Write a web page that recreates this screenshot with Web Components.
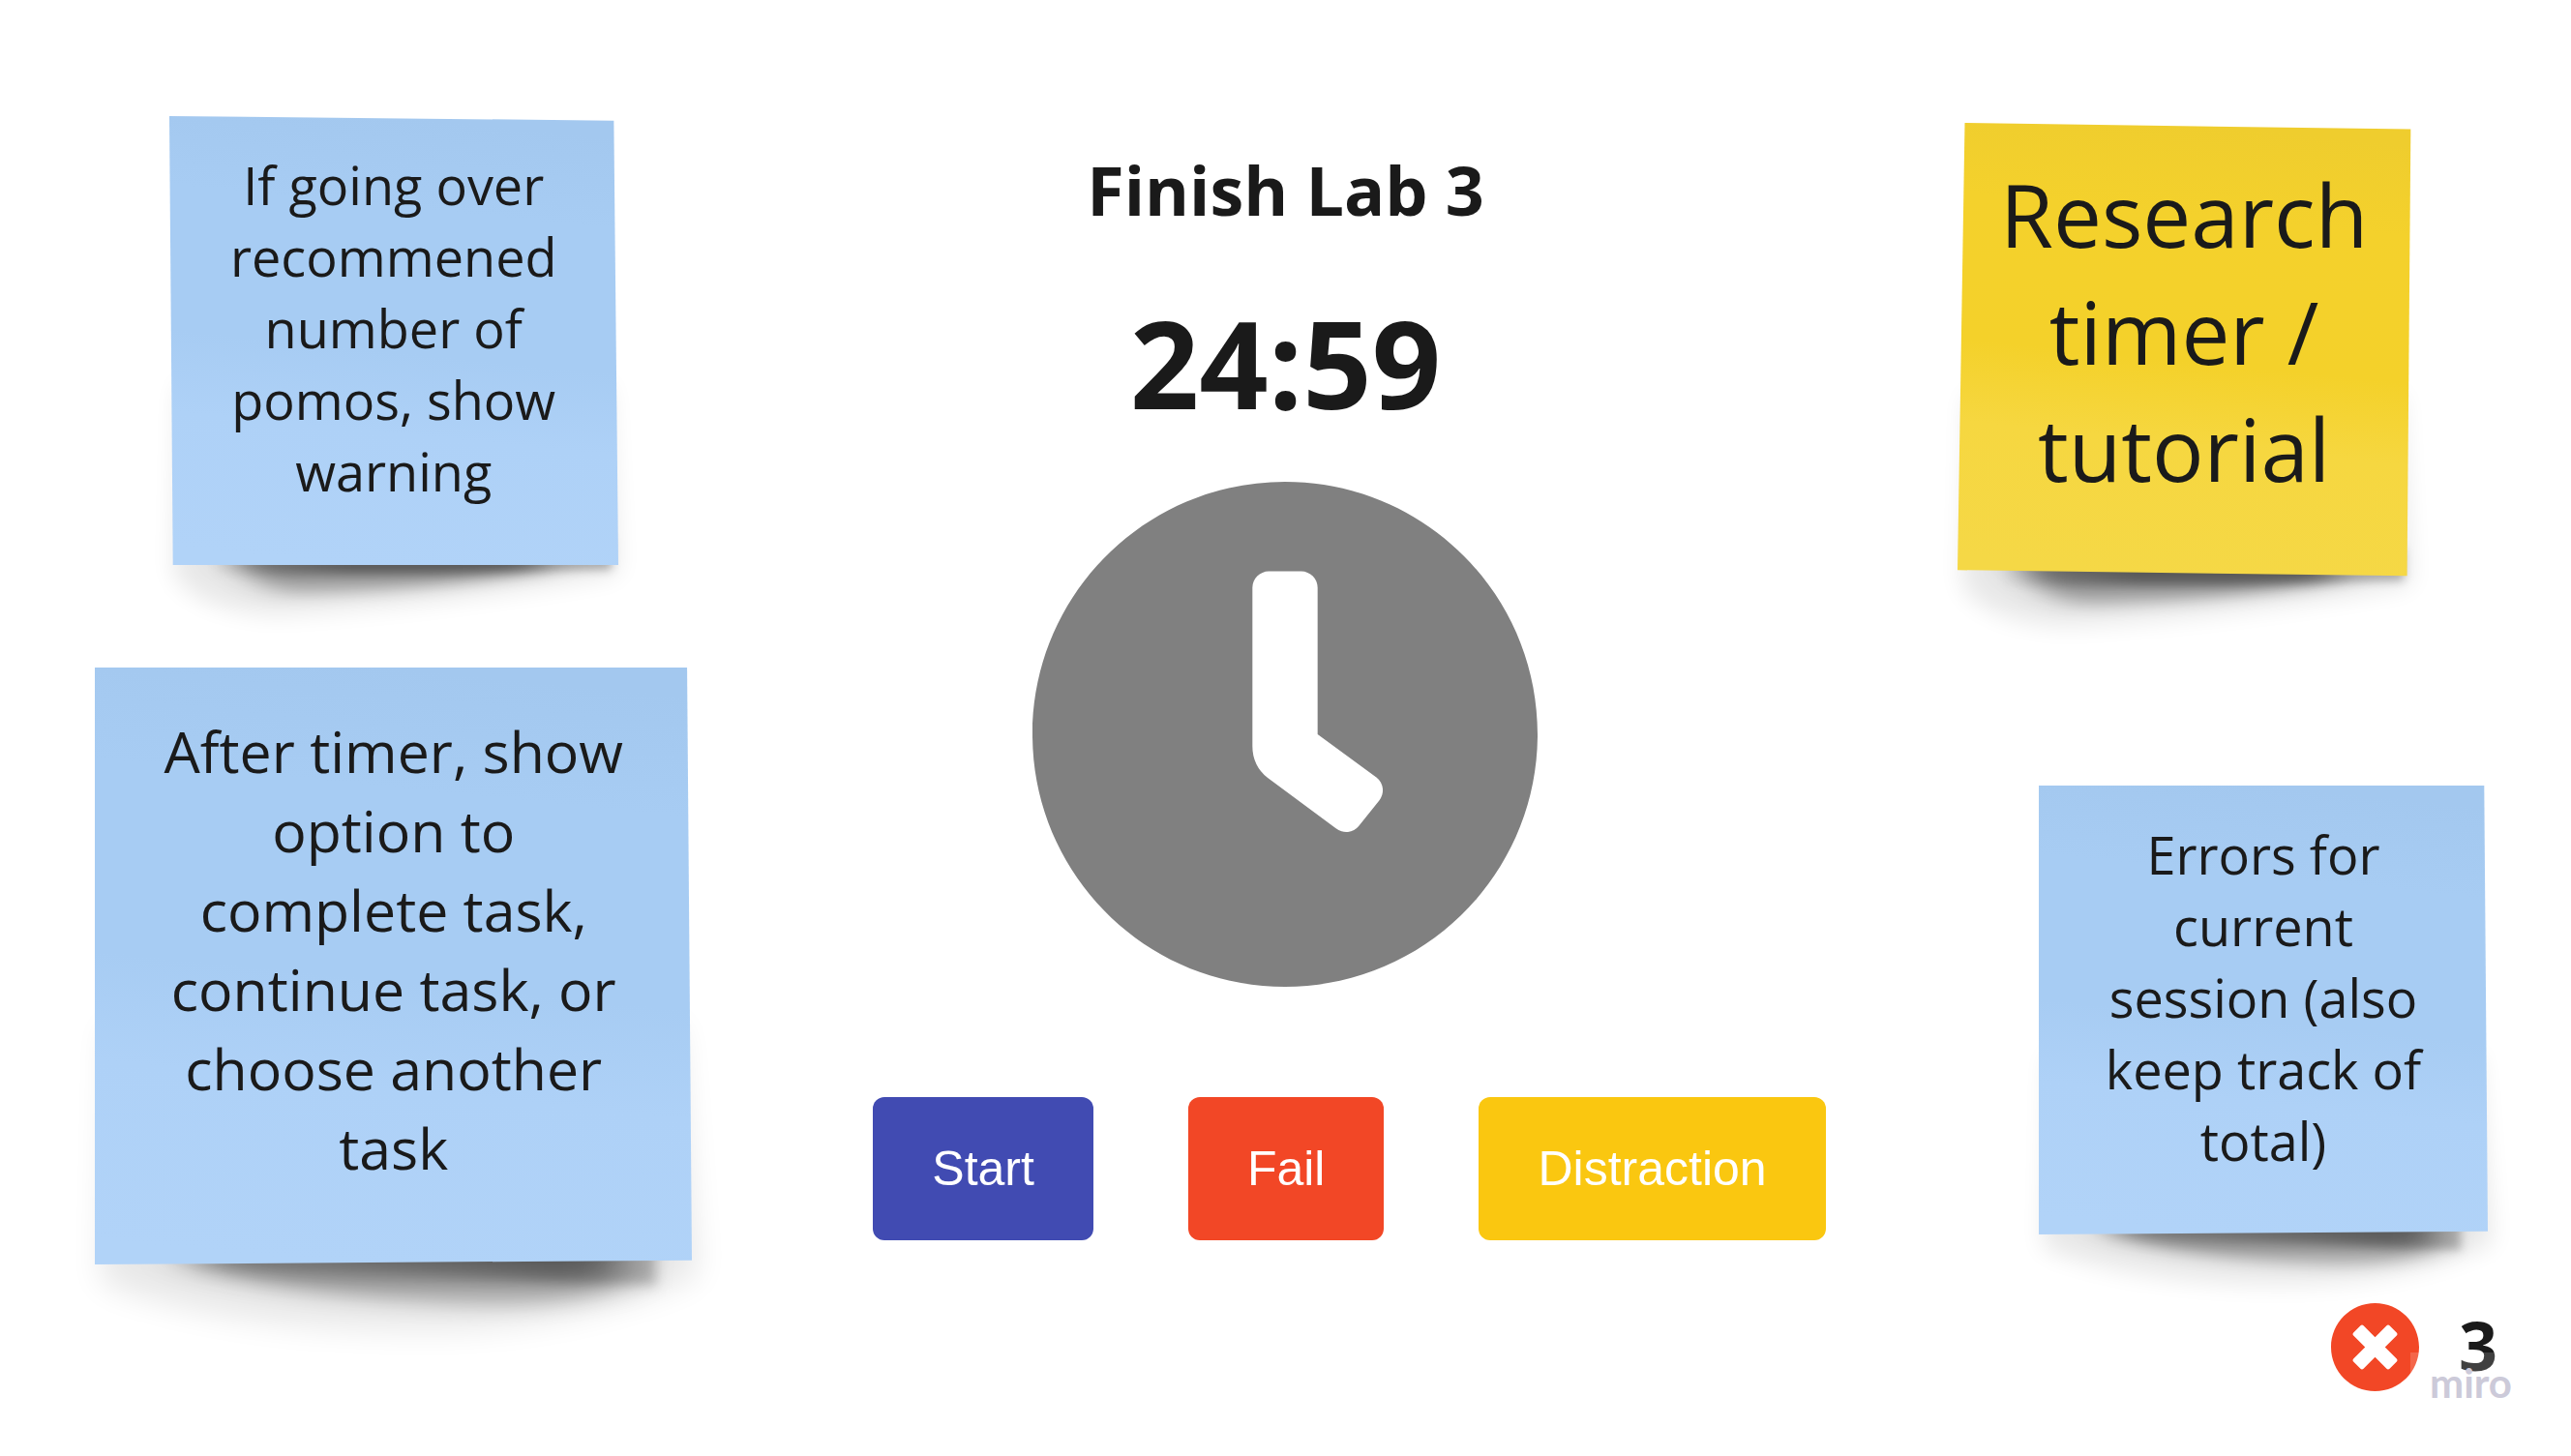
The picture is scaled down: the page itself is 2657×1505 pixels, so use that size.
<!DOCTYPE html>
<html lang="en">
<head>
<meta charset="utf-8">
<title>Finish Lab 3</title>
<style>
  body { margin: 0; background: #fff; color: #1a1a1a; font-family: "Open Sans", "Noto Sans", sans-serif; }
</style>
</head>
<body>
<pomo-board>
  <sticky-note slot="left" tone="blue" cut="a">If going over recommened number of pomos, show warning</sticky-note>
  <sticky-note slot="left" tone="blue" cut="b" size="large">After timer, show option to complete task, continue task, or choose another task</sticky-note>
  <pomo-session heading="Finish Lab 3" time="24:59"></pomo-session>
  <sticky-note slot="right" tone="yellow" cut="c" size="headline">Research timer / tutorial</sticky-note>
  <sticky-note slot="right" tone="blue" cut="b">Errors for current session (also keep track of total)</sticky-note>
  <error-count slot="right">3</error-count>
  <board-mark slot="mark">miro</board-mark>
</pomo-board>

<script>
const attach = (el, html) => { el.attachShadow({ mode: "open" }).innerHTML = html; };

customElements.define("pomo-board", class extends HTMLElement {
  constructor() {
    super();
    attach(this, `
      <style>
        :host { display: block; position: relative; min-height: 100vh; overflow: hidden; }
        main { display: grid; grid-template-columns: 28fr 43fr 28fr; align-items: start; }
        .side { display: flex; flex-direction: column; }
        .left { align-items: center; gap: 106px; padding: 120px 0 0 62px; }
        .right { align-items: flex-end; padding: 127px 76px 0 0; }
        .right ::slotted(sticky-note) { margin: 0 10px 71px 0; }
        .right ::slotted(sticky-note[size="headline"]) { margin: 0 90px 217px 0; }
      </style>
      <main>
        <div class="side left"><slot name="left"></slot></div>
        <slot></slot>
        <div class="side right"><slot name="right"></slot></div>
      </main>
      <slot name="mark"></slot>`);
  }
});

const CUTS = {
  a: { paper: "0,0 99,1 100,100 0.8,100", curl: "left" },
  b: { paper: "0,0 99.2,0 100,99.3 0,100", curl: "right" },
  c: { paper: "1.6,0 100,1.4 99.2,100 0,98.7", curl: "left" }
};
const CURLS = {
  left: `<path class="halo" d="M2 60L98 60L100 102Q60 109 24 111Q6 110 1 102Z"/>
         <path class="fall" d="M14 94L80 94L84 101Q55 106 26 107Q19 105 14 98Z"/>
         <path class="edge" fill="url(#fromleft)" d="M10 94L98.5 94L98.5 101L60 102L10 102Z"/>`,
  right: `<path class="halo" d="M2 60L98 60L101 102Q80 111 55 111Q22 111 1 103Z"/>
          <path class="fall" d="M16 94L88 94L88 104Q76 108 62 107Q30 105 16 100Z"/>
          <path class="edge" fill="url(#fromright)" d="M20 94L94 94L94 103.5L80 103L20 100.5Z"/>`
};
const TONES = {
  blue: ["#a3c8ef", "#a7ccf3", "#a7ccf3", "#aed1f7", "#b1d3f8"],
  yellow: ["#efcd2e", "#f4d12c", "#f4d12a", "#f6d740", "#f5d846"]
};

customElements.define("sticky-note", class extends HTMLElement {
  constructor() {
    super();
    const cut = CUTS[this.getAttribute("cut")];
    const tone = TONES[this.getAttribute("tone")];
    attach(this, `
      <style>
        :host { display: grid; width: 464px; max-width: 100%; aspect-ratio: 1; font-size: 54px; line-height: 74px; --pad: 34px 57px 0; }
        :host([size="large"]) { width: 617px; font-size: 59px; line-height: 82px; --pad: 45px 66px 0; }
        :host([size="headline"]) { width: 468px; font-size: 89px; line-height: 121px; --pad: 34px 44px 0; }
        svg, p { grid-area: 1 / 1; }
        svg { width: 100%; height: 100%; overflow: visible; }
        p { margin: 0; padding: var(--pad); text-align: center; position: relative; }
        .halo { fill: #000; opacity: .09; filter: url(#wide); }
        .fall { fill: url(#fade); filter: url(#soft); }
        .edge { filter: url(#near); }
      </style>
      <svg viewBox="0 0 100 100" preserveAspectRatio="none" aria-hidden="true">
        <defs>
          <filter id="wide" x="-20%" y="-20%" width="140%" height="150%"><feGaussianBlur stdDeviation="2.6"/></filter>
          <filter id="soft" x="-30%" y="-100%" width="160%" height="300%"><feGaussianBlur stdDeviation="4 1.6"/></filter>
          <filter id="near" x="-20%" y="-100%" width="140%" height="300%"><feGaussianBlur stdDeviation="1"/></filter>
          <linearGradient id="fade" gradientUnits="userSpaceOnUse" x1="0" y1="99" x2="0" y2="109">
            <stop offset="0" stop-color="#000" stop-opacity=".5"/>
            <stop offset=".5" stop-color="#000" stop-opacity=".3"/>
            <stop offset="1" stop-color="#000" stop-opacity=".05"/>
          </linearGradient>
          <linearGradient id="fromleft" gradientUnits="userSpaceOnUse" x1="8" y1="0" x2="100" y2="0">
            <stop offset="0" stop-color="#000" stop-opacity="0"/>
            <stop offset=".35" stop-color="#000" stop-opacity=".28"/>
            <stop offset="1" stop-color="#000" stop-opacity=".28"/>
          </linearGradient>
          <linearGradient id="fromright" gradientUnits="userSpaceOnUse" x1="20" y1="0" x2="94" y2="0">
            <stop offset="0" stop-color="#000" stop-opacity="0"/>
            <stop offset=".75" stop-color="#000" stop-opacity=".26"/>
            <stop offset="1" stop-color="#000" stop-opacity=".24"/>
          </linearGradient>
          <linearGradient id="paper" gradientUnits="userSpaceOnUse" x1="50" y1="0" x2="40" y2="100">
            <stop offset="0" stop-color="${tone[0]}"/>
            <stop offset=".2" stop-color="${tone[1]}"/>
            <stop offset=".52" stop-color="${tone[2]}"/>
            <stop offset=".7" stop-color="${tone[3]}"/>
            <stop offset="1" stop-color="${tone[4]}"/>
          </linearGradient>
        </defs>
        ${CURLS[cut.curl]}
        <polygon points="${cut.paper}" fill="url(#paper)"/>
      </svg>
      <p><slot></slot></p>`);
  }
});

customElements.define("pomo-session", class extends HTMLElement {
  constructor() {
    super();
    attach(this, `
      <style>
        :host { display: flex; flex-direction: column; align-items: center; padding-top: 148px; }
        h1 { margin: 0; font-size: 70px; line-height: 96px; font-weight: 700; }
        time { margin-top: 45px; font-size: 125px; line-height: 172px; font-weight: 700; }
        svg { width: 522px; height: 522px; margin-top: 37px; }
        .actions { display: flex; gap: 98px; margin-top: 114px; padding-left: 132px; }
      </style>
      <h1>${this.getAttribute("heading")}</h1>
      <time role="timer">${this.getAttribute("time")}</time>
      <svg viewBox="8 8 496 496" fill="#808080" aria-hidden="true"><path d="M256,8C119,8,8,119,8,256S119,504,256,504,504,393,504,256,393,8,256,8Zm92.49,313h0l-20,25a16,16,0,0,1-22.49,2.5h0l-67-49.72a40,40,0,0,1-15-31.23V112a16,16,0,0,1,16-16h32a16,16,0,0,1,16,16V256l58,42.5A16,16,0,0,1,348.49,321Z"/></svg>
      <div class="actions">
        <pomo-button style="--fill:#414bb2">Start</pomo-button>
        <pomo-button style="--fill:#f24726">Fail</pomo-button>
        <pomo-button style="--fill:#fac710">Distraction</pomo-button>
      </div>`);
  }
});

customElements.define("pomo-button", class extends HTMLElement {
  constructor() {
    super();
    attach(this, `
      <style>
        :host { display: block; }
        button { display: block; margin: 0; border: 0; border-radius: 12px; padding: 45px 61px; background: var(--fill); color: #fff;
          font: 50px/58px "Liberation Sans", Arial, sans-serif; white-space: nowrap; cursor: pointer; }
      </style>
      <button type="button"><slot></slot></button>`);
  }
});

customElements.define("error-count", class extends HTMLElement {
  constructor() {
    super();
    attach(this, `
      <style>
        :host { display: flex; align-items: center; gap: 41px; height: 91px; }
        svg { width: 91px; height: 91px; }
        strong { font-size: 70px; line-height: 84px; font-weight: 700; padding-bottom: 5px; }
      </style>
      <svg viewBox="8 8 496 496" fill="#f24726" aria-hidden="true"><path d="M256 8C119 8 8 119 8 256s111 248 248 248 248-111 248-248S393 8 256 8zm121.6 313.1c4.7 4.7 4.7 12.3 0 17L338 377.6c-4.7 4.7-12.3 4.7-17 0L256 312l-65.1 65.6c-4.7 4.7-12.3 4.7-17 0L134.4 338c-4.7-4.7-4.7-12.3 0-17l65.6-65-65.6-65.1c-4.7-4.7-4.7-12.3 0-17l39.6-39.6c4.7-4.7 12.3-4.7 17 0l65 65.7 65.1-65.6c4.7-4.7 12.3-4.7 17 0l39.6 39.6c4.7 4.7 4.7 12.3 0 17L312 256l65.6 65.1z"/></svg>
      <strong><slot></slot></strong>`);
  }
});

customElements.define("board-mark", class extends HTMLElement {
  constructor() {
    super();
    attach(this, `
      <style>
        :host { display: block; position: absolute; right: 41px; bottom: 41px; padding: 6px 20px 10px; background: rgba(255, 255, 255, .17);
          color: #cccad9; font: 700 42px/50px Lato, sans-serif; }
      </style>
      <slot></slot>`);
  }
});
</script>
</body>
</html>
